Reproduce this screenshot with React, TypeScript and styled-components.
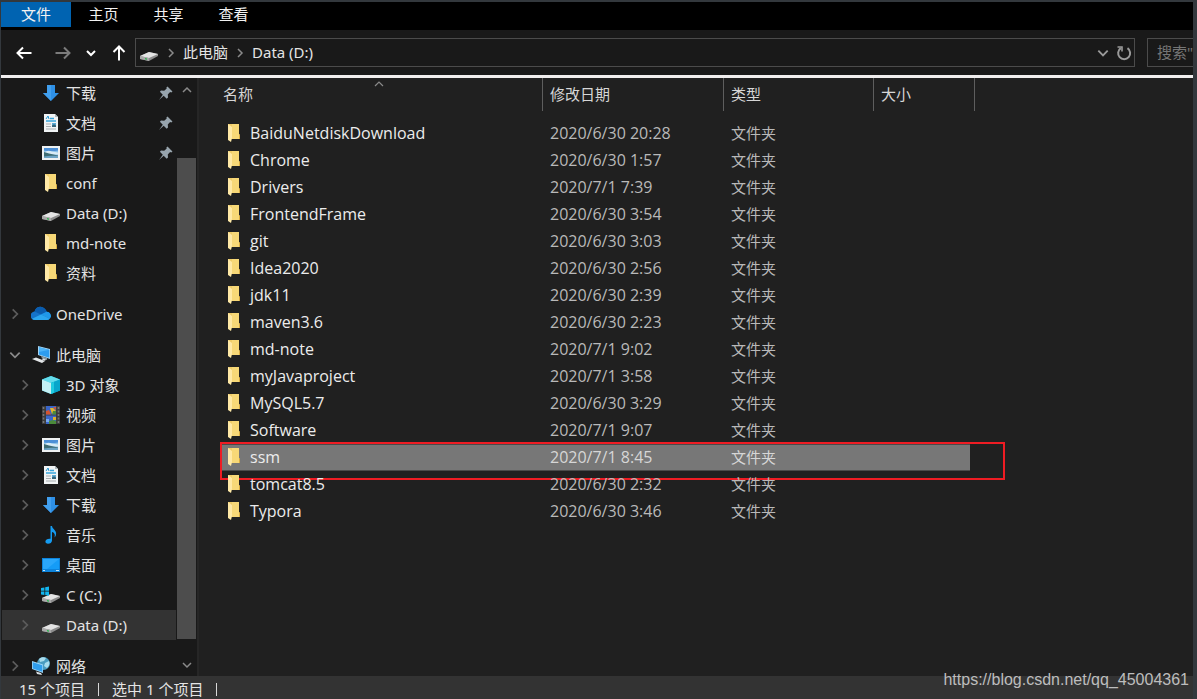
import React from "react";
import styled, { createGlobalStyle, css } from "styled-components";

const GlobalStyle = createGlobalStyle`
  * { box-sizing: border-box; }
  html, body { margin: 0; padding: 0; background: #33383d; }
  body, button, input, table {
    font-family: "Noto Sans", "Noto Sans CJK SC", sans-serif;
    font-size: 15px;
    line-height: 20px;
  }
  button { border: 0; padding: 0; margin: 0; background: none; color: inherit; }
  ul { list-style: none; margin: 0; padding: 0; }
  svg { display: block; flex: none; }
`;

/* ---------- icons ---------- */

type Dir = "up" | "down" | "left" | "right";
const chevrons: Record<Dir, string> = {
  up: "M2 8l4-4 4 4",
  down: "M2 4l4 4 4-4",
  left: "M8 2l-4 4 4 4",
  right: "M4 2l4 4-4 4",
};

const Chevron = ({ dir, color, size = 12, weight = 1.5 }: { dir: Dir; color: string; size?: number; weight?: number }) => (
  <svg width={size} height={size} viewBox="0 0 12 12" fill="none" stroke={color} strokeWidth={weight}>
    <path d={chevrons[dir]} />
  </svg>
);

const Arrow = ({ dir, color }: { dir: Dir; color: string }) => {
  const turn = { left: 0, up: 90, right: 180, down: 270 }[dir];
  return (
    <svg width="16" height="16" viewBox="0 0 16 16" fill="none" stroke={color} strokeWidth="2">
      <path d="M15.500 8H1.500M7 2.500L1.500 8 7 13.500" transform={`rotate(${turn} 8 8)`} />
    </svg>
  );
};

const RefreshIcon = () => (
  <svg width="16" height="16" viewBox="0 0 16 16" fill="none" stroke="#9a9a9a" strokeWidth="2">
    <path d="M11.500 3.200A6 6 0 1 1 4.800 3.200" />
    <path d="M1.500 2H6V6.500" strokeWidth="1.600" />
  </svg>
);

const FolderIcon = () => (
  <svg width="20" height="20" viewBox="0 0 20 20">
    <path d="M4 1h11v10l1 1v4H4z" fill="#f0cc68" />
    <path d="M8 1h7v15H8z" fill="#f7d877" />
    <path d="M4 1l4 3v11l-1 4-3-2z" fill="#ffe9a6" />
    <path d="M15 11l1 1v4h-1z" fill="#d9ab3f" />
  </svg>
);

const DriveIcon = ({ system = false }: { system?: boolean }) => (
  <svg width="20" height="20" viewBox="0 0 20 20">
    <path d="M1 13l9-4 9 2v2l-9 5-9-2z" fill="#8d8d8d" />
    <path d="M1 13l9-4 9 2-9 4z" fill="#e4e4e4" />
    <path d="M1 13l9 2v3l-9-2z" fill="#a9a9a9" />
    <path d="M6 15l2 .5v1.2l-2-.4z" fill="#27b34a" />
    {system && (
      <path d="M0 3l3.400-.6v3.400H0zM4.200 2.300L8 1.600v4.200H4.200zM0 6.600h3.400V10L0 9.400zM4.200 6.600H8v4.200l-3.800-.7z" fill="#12b5ee" />
    )}
  </svg>
);

const DownloadIcon = () => (
  <svg width="20" height="20" viewBox="0 0 20 20">
    <path d="M6 2h8v8h4l-8 8-8-8h4z" fill="#2e90e6" />
    <path d="M6 2h4v16l-8-8h4z" fill="#419fee" />
  </svg>
);

const DocumentIcon = () => (
  <svg width="20" height="20" viewBox="0 0 20 20">
    <path d="M3 1h11l3 3v15H3z" fill="#f1f4f5" />
    <path d="M14 1v3h3z" fill="#aeb9bd" />
    <path d="M5 6l2-3 1 3" fill="none" stroke="#2394cf" />
    <path d="M9 5.500h4M5 8h10" stroke="#39a5dc" strokeWidth="1.400" />
    <path d="M5 11h5M5 13.500h5M5 16h10" stroke="#a8aeb1" />
    <path d="M11 10h4v4h-4z" fill="#5aa9d2" />
    <path d="M11 12.500l2-1.200 2 1.200V14h-4z" fill="#35667c" />
  </svg>
);

const PictureIcon = () => (
  <svg width="20" height="20" viewBox="0 0 20 20">
    <path d="M1 3h18v14H1z" fill="#eef1f2" />
    <path d="M3 5h14v10H3z" fill="#8dc4ea" />
    <path d="M3 5h14v2.500c-4 1-9 1-14 0z" fill="#4c8fd6" />
    <path d="M5 8.500c2-1.600 4-.4 6 0l6 1v2H3v-2z" fill="#d8ebf5" />
    <path d="M3 9l5 1.500 9 2V15H3z" fill="#3e6d74" />
    <path d="M3 13.500c4-1 9-1 14-.5v2H3z" fill="#6ba3c4" />
  </svg>
);

const CloudIcon = () => (
  <svg width="20" height="20" viewBox="0 0 20 20">
    <path d="M4 16a4 4 0 0 1-.5-8.500C5 3 9 2 12 3.500c1.800.8 3 2.300 3.600 4.200A4.200 4.200 0 0 1 16 16z" fill="#1573c9" />
    <path d="M3.500 7.500C5 3 9 2 12 3.500c1.800.8 3 2.300 3.600 4.200L10 10.500z" fill="#0a5cae" />
    <path d="M10 10.500l5.600-2.800c4.400.2 5.600 4.600 3.200 7z" fill="#1f97e8" />
    <path d="M1 14.700l9-4.200 8.800 4.200A4 4 0 0 1 16 16H4a4 4 0 0 1-3-1.300z" fill="#2ba6ef" />
  </svg>
);

const ComputerIcon = () => (
  <svg width="20" height="20" viewBox="0 0 20 20">
    <path d="M7 1l12 3v10L7 10z" fill="#a5d5f3" />
    <path d="M8 2.300l10.300 2.500v8L8 9.400z" fill="#2d9cef" />
    <path d="M8 2.300l10.300 2.500L8 7z" fill="#4fb4f8" />
    <path d="M10 11l6 2v2l-5-1.500z" fill="#8d9aa2" />
    <path d="M1 14l4-1.500 9 3.500-3 2z" fill="#e3e6e8" />
    <path d="M12 13.500l3 1-1 1.200-3-1z" fill="#dfe4e7" />
  </svg>
);

const CubeIcon = () => (
  <svg width="20" height="20" viewBox="0 0 20 20">
    <path d="M10 1l9 3.500v11L10 19l-9-3.500v-11z" fill="#12b4d4" />
    <path d="M1 4.500L10 1l9 3.500L10 8z" fill="#65dcec" />
    <path d="M1 4.500L10 8v11l-9-3.500z" fill="#c5f1f4" />
    <path d="M10 8l9-3.500v11L10 19z" fill="#08a6cb" />
    <path d="M10 8l3-1.200v11L10 19z" fill="#20cbe0" />
  </svg>
);

const VideoIcon = () => (
  <svg width="20" height="20" viewBox="0 0 20 20">
    <path d="M1 1h18v18H1z" fill="#3b3b3b" />
    <path d="M2.500 2v16M17.500 2v16" stroke="#777777" strokeWidth="1.600" strokeDasharray="2 1.500" />
    <path d="M5 1h10v8.500H5zM5 10.500h10V19H5z" fill="#3a66c8" />
    <path d="M5 6l3-1 2 4.500H5zM12 2h3v3z" fill="#d4542f" />
    <path d="M9 3h3l3 3-2 3h-2z" fill="#e4b52c" />
    <path d="M12 6h3v3.500h-4zM8 16l4-1 3 1v3H8z" fill="#4b8a3b" />
    <path d="M12 12h3v3h-3z" fill="#d8b12f" />
    <path d="M5 14h3v3H5z" fill="#76a8ee" />
  </svg>
);

const MusicIcon = () => (
  <svg width="20" height="20" viewBox="0 0 20 20">
    <path d="M9.500 1H11c.5 3.500 5 4 4 9-.3 1.300-1 2-1.500 2.500C14.500 9 13 7.500 11 7v8.500c0 2-1.800 3.300-4 3.300-1.600 0-2.600-.9-2.600-2.200 0-2 2.600-3.300 5.100-2.800z" fill="#159bf0" />
  </svg>
);

const DesktopIcon = () => (
  <svg width="20" height="20" viewBox="0 0 20 20">
    <path d="M1 3h18v14H1z" fill="#0d84dc" />
    <path d="M2 4h16v10H2z" fill="#159cf7" />
    <path d="M2 4h16L6 14H2z" fill="#2aa7fb" />
    <path d="M2 15.500h2M15 15.500h3" stroke="#bfe3fb" />
  </svg>
);

const NetworkIcon = () => (
  <svg width="20" height="20" viewBox="0 0 20 20">
    <circle cx="12.500" cy="7.500" r="6.500" fill="#4a9cc0" />
    <path d="M8 3c2-2 5-2 7-1l-2 3-4 1zM14 7l4-2c1 3 0 5-2 7l-3-2z" fill="#a9dcec" />
    <path d="M1 5l11 3.500V17L1 13z" fill="#9fd8f8" />
    <path d="M1.800 6.200L11.300 9.200v6.600L1.800 12.400z" fill="#2f9eed" />
    <path d="M5 15.500l5 1.500 1 2-5-1z" fill="#d8dee1" />
  </svg>
);

const PinIcon = () => (
  <svg width="16" height="16" viewBox="0 0 16 16">
    <path d="M9.500 1.500l5 5-1.200.9-1.200-.3-2.300 2.500.2 3-1.300 1.100-3-3L1 15l3.800-5.300-2.900-2.900L3 5.600l3.200.1 2.500-2.200-.3-1z" fill="#98a5ae" />
  </svg>
);

/* ---------- layout ---------- */

const Window = styled.div`
  position: relative;
  display: flex;
  flex-direction: column;
  height: 100vh;
  padding: 2px 4px 0 1px;
  background: #33383d;
  color: #e4e4e4;
`;

const TabBar = styled.nav`
  display: flex;
  flex: none;
  height: 28px;
  background: #000;
`;

const Tab = styled.button<{ $active?: boolean }>`
  width: 65px;
  height: 25px;
  padding-bottom: 2px;
  color: #f2f2f2;
  ${(p) => p.$active && css`
    width: 70px;
    background: #0063b1;
  `}
`;

const Toolbar = styled.div`
  display: flex;
  flex: none;
  align-items: center;
  height: 45px;
  padding-left: 15px;
  background: #191919;
`;

const NavButtons = styled.div`
  display: flex;
  align-items: center;
  gap: 14px;
  width: 119px;
`;

const NavButton = styled.button<{ $wide?: boolean }>`
  margin-right: ${(p) => (p.$wide ? "9px" : "0")};
`;

const AddressBar = styled.div`
  display: flex;
  flex: 1;
  align-items: center;
  height: 29px;
  padding: 0 2px 0 3px;
  border: 1px solid #4b4b4b;
`;

const CrumbItem = styled.span`
  display: flex;
  align-items: center;
  gap: 6px;
  margin-left: 6px;
`;

const Crumb = styled.button`
  padding-bottom: 2px;
`;

const AddressActions = styled.div`
  display: flex;
  align-items: center;
  gap: 6px;
  margin-left: auto;
`;

const SearchBox = styled.input`
  width: 46px;
  height: 29px;
  margin-left: 12px;
  padding: 0 0 2px 9px;
  border: 1px solid #4b4b4b;
  border-right: 0;
  border-radius: 0;
  outline: 0;
  background: #191919;
  &::placeholder { color: #757575; opacity: 1; }
`;

const Body = styled.div`
  display: flex;
  flex: 1;
  min-height: 0;
  border-top: 3px solid #f0eeee;
`;

const Sidebar = styled.aside`
  display: flex;
  width: 198px;
  background: #191919;
  border-right: 2px solid #262626;
`;

const Tree = styled.div`
  display: flex;
  flex: 1;
  flex-direction: column;
  gap: 11px;
  padding-left: 1px;
  overflow: hidden;
`;

const TreeRow = styled.li<{ $level: number; $selected?: boolean }>`
  display: flex;
  align-items: center;
  height: 30px;
  padding-left: ${(p) => (p.$level ? 16 : 6)}px;
  background: ${(p) => (p.$selected ? "#333333" : "transparent")};
`;

const Expander = styled.span`
  width: 23px;
`;

const TreeLabel = styled.span`
  flex: 1;
  margin-left: 5px;
`;

const Pin = styled.span`
  margin-right: 2px;
`;

const ScrollBar = styled.div`
  display: flex;
  flex-direction: column;
  align-items: center;
  width: 21px;
  padding: 6px 0 5px;
`;

const Track = styled.div`
  display: flex;
  flex: 1;
  flex-direction: column;
  align-self: stretch;
  padding: 62px 0 20px 1px;
`;

const Thumb = styled.div`
  flex: 1;
  width: 19px;
  background: #4d4d4d;
`;

const Content = styled.main`
  flex: 1;
  padding-left: 22px;
  background: #202020;
`;

const FileTable = styled.table`
  width: 754px;
  table-layout: fixed;
  border-collapse: separate;
  border-spacing: 0;
  text-align: left;
`;

const HeadCell = styled.th<{ $width: number }>`
  width: ${(p) => p.$width}px;
  height: 42px;
  padding: 0;
  vertical-align: top;
  font-weight: 400;
  color: #d6d6d6;
`;

const HeadLabel = styled.div`
  display: flex;
  align-items: center;
  height: 33px;
  padding: 0 0 2px 7px;
  border-right: 1px solid #5e5e5e;
`;

const NameHead = styled(HeadLabel)`
  padding-left: 2px;
`;

const SortMark = styled.span`
  align-self: flex-start;
  margin-left: 120px;
`;

const Cell = styled.td<{ $last?: boolean }>`
  height: 27px;
  padding: 0 0 2px 7px;
  color: #b9b9b9;
  ${(p) => p.$last && css`
    border-right: 5px solid transparent;
    background-clip: padding-box;
  `}
`;

const DateCell = styled(Cell)`
  font-family: "Open Sans", sans-serif;
  font-size: 16px;
`;

const FileRow = styled.tr<{ $selected?: boolean }>`
  position: relative;
  ${(p) => p.$selected && css`
    ${Cell} {
      background-color: #777777;
      color: #d6d6d6;
      box-shadow: inset 0 1px #4a4a4a, inset 0 -1px #4a4a4a;
    }
  `}
`;

const NameCell = styled(Cell)`
  padding-left: 3px;
`;

const FileName = styled.span`
  display: flex;
  align-items: center;
  gap: 6px;
  font-family: "Open Sans", sans-serif;
  font-size: 16px;
  color: #ececec;
`;

const Highlight = styled.span`
  position: absolute;
  top: -2px;
  left: -1px;
  width: 785px;
  height: 38px;
  border: 2px solid #ee1c23;
  pointer-events: none;
`;

const StatusBar = styled.footer`
  display: flex;
  flex: none;
  align-items: center;
  gap: 13px;
  height: 23px;
  padding: 3px 0 0 18px;
  background: #333333;
`;

const Divider = styled.span`
  width: 1px;
  height: 13px;
  background: #d8d8d8;
`;

const Watermark = styled.span`
  position: absolute;
  right: 8px;
  bottom: 9px;
  font-family: "Liberation Sans", sans-serif;
  font-size: 16px;
  color: #bdbdbd;
`;

/* ---------- data ---------- */

type Node = { label: string; icon: React.ReactNode; level?: number; pinned?: boolean; expand?: "open" | "closed"; selected?: boolean };

const groups: Node[][] = [
  [
    { label: "下载", icon: <DownloadIcon />, level: 1, pinned: true },
    { label: "文档", icon: <DocumentIcon />, level: 1, pinned: true },
    { label: "图片", icon: <PictureIcon />, level: 1, pinned: true },
    { label: "conf", icon: <FolderIcon />, level: 1 },
    { label: "Data (D:)", icon: <DriveIcon />, level: 1 },
    { label: "md-note", icon: <FolderIcon />, level: 1 },
    { label: "资料", icon: <FolderIcon />, level: 1 },
  ],
  [{ label: "OneDrive", icon: <CloudIcon />, expand: "closed" }],
  [
    { label: "此电脑", icon: <ComputerIcon />, expand: "open" },
    { label: "3D 对象", icon: <CubeIcon />, level: 1, expand: "closed" },
    { label: "视频", icon: <VideoIcon />, level: 1, expand: "closed" },
    { label: "图片", icon: <PictureIcon />, level: 1, expand: "closed" },
    { label: "文档", icon: <DocumentIcon />, level: 1, expand: "closed" },
    { label: "下载", icon: <DownloadIcon />, level: 1, expand: "closed" },
    { label: "音乐", icon: <MusicIcon />, level: 1, expand: "closed" },
    { label: "桌面", icon: <DesktopIcon />, level: 1, expand: "closed" },
    { label: "C (C:)", icon: <DriveIcon system />, level: 1, expand: "closed" },
    { label: "Data (D:)", icon: <DriveIcon />, level: 1, expand: "closed", selected: true },
  ],
  [{ label: "网络", icon: <NetworkIcon />, expand: "closed" }],
];

const files: [string, string][] = [
  ["BaiduNetdiskDownload", "2020/6/30 20:28"],
  ["Chrome", "2020/6/30 1:57"],
  ["Drivers", "2020/7/1 7:39"],
  ["FrontendFrame", "2020/6/30 3:54"],
  ["git", "2020/6/30 3:03"],
  ["Idea2020", "2020/6/30 2:56"],
  ["jdk11", "2020/6/30 2:39"],
  ["maven3.6", "2020/6/30 2:23"],
  ["md-note", "2020/7/1 9:02"],
  ["myJavaproject", "2020/7/1 3:58"],
  ["MySQL5.7", "2020/6/30 3:29"],
  ["Software", "2020/7/1 9:07"],
  ["ssm", "2020/7/1 8:45"],
  ["tomcat8.5", "2020/6/30 2:32"],
  ["Typora", "2020/6/30 3:46"],
];

export default function App() {
  return (
    <>
      <GlobalStyle />
      <Window>
        <TabBar>
          <Tab $active>文件</Tab>
          <Tab>主页</Tab>
          <Tab>共享</Tab>
          <Tab>查看</Tab>
        </TabBar>
        <Toolbar>
          <NavButtons>
            <NavButton $wide aria-label="后退"><Arrow dir="left" color="#fff" /></NavButton>
            <NavButton aria-label="前进"><Arrow dir="right" color="#7c7c7c" /></NavButton>
            <NavButton aria-label="最近浏览的位置"><Chevron dir="down" color="#fff" weight={2} /></NavButton>
            <NavButton aria-label="向上"><Arrow dir="up" color="#fff" /></NavButton>
          </NavButtons>
          <AddressBar>
            <DriveIcon />
            <CrumbItem>
              <Chevron dir="right" color="#8a8a8a" />
              <Crumb>此电脑</Crumb>
            </CrumbItem>
            <CrumbItem>
              <Chevron dir="right" color="#8a8a8a" />
              <Crumb>Data (D:)</Crumb>
            </CrumbItem>
            <AddressActions>
              <NavButton aria-label="展开"><Chevron dir="down" color="#9a9a9a" size={14} weight={1.6} /></NavButton>
              <NavButton aria-label="刷新"><RefreshIcon /></NavButton>
            </AddressActions>
          </AddressBar>
          <SearchBox aria-label="搜索" placeholder={'搜索"'} />
        </Toolbar>
        <Body>
          <Sidebar>
            <Tree>
              {groups.map((nodes, g) => (
                <ul key={g}>
                  {nodes.map((n) => (
                    <TreeRow key={n.label} $level={n.level ?? 0} $selected={n.selected}>
                      <Expander>
                        {n.expand === "closed" && <Chevron dir="right" color="#5c5c5c" size={14} />}
                        {n.expand === "open" && <Chevron dir="down" color="#8a8a8a" size={14} />}
                      </Expander>
                      {n.icon}
                      <TreeLabel>{n.label}</TreeLabel>
                      {n.pinned && <Pin><PinIcon /></Pin>}
                    </TreeRow>
                  ))}
                </ul>
              ))}
            </Tree>
            <ScrollBar>
              <Chevron dir="up" color="#8a8a8a" />
              <Track><Thumb /></Track>
              <Chevron dir="down" color="#8a8a8a" />
            </ScrollBar>
          </Sidebar>
          <Content>
            <FileTable>
              <thead>
                <tr>
                  <HeadCell $width={322}>
                    <NameHead>
                      名称
                      <SortMark><Chevron dir="up" color="#8a8a8a" weight={1.2} /></SortMark>
                    </NameHead>
                  </HeadCell>
                  <HeadCell $width={181}><HeadLabel>修改日期</HeadLabel></HeadCell>
                  <HeadCell $width={150}><HeadLabel>类型</HeadLabel></HeadCell>
                  <HeadCell $width={101}><HeadLabel>大小</HeadLabel></HeadCell>
                </tr>
              </thead>
              <tbody>
                {files.map(([name, date]) => (
                  <FileRow key={name} $selected={name === "ssm"}>
                    <NameCell>
                      <FileName><FolderIcon />{name}</FileName>
                      {name === "ssm" && <Highlight />}
                    </NameCell>
                    <DateCell>{date}</DateCell>
                    <Cell>文件夹</Cell>
                    <Cell $last />
                  </FileRow>
                ))}
              </tbody>
            </FileTable>
          </Content>
        </Body>
        <StatusBar>
          <span>15 个项目</span>
          <Divider />
          <span>选中 1 个项目</span>
          <Divider />
        </StatusBar>
        <Watermark>https://blog.csdn.net/qq_45004361</Watermark>
      </Window>
    </>
  );
}
